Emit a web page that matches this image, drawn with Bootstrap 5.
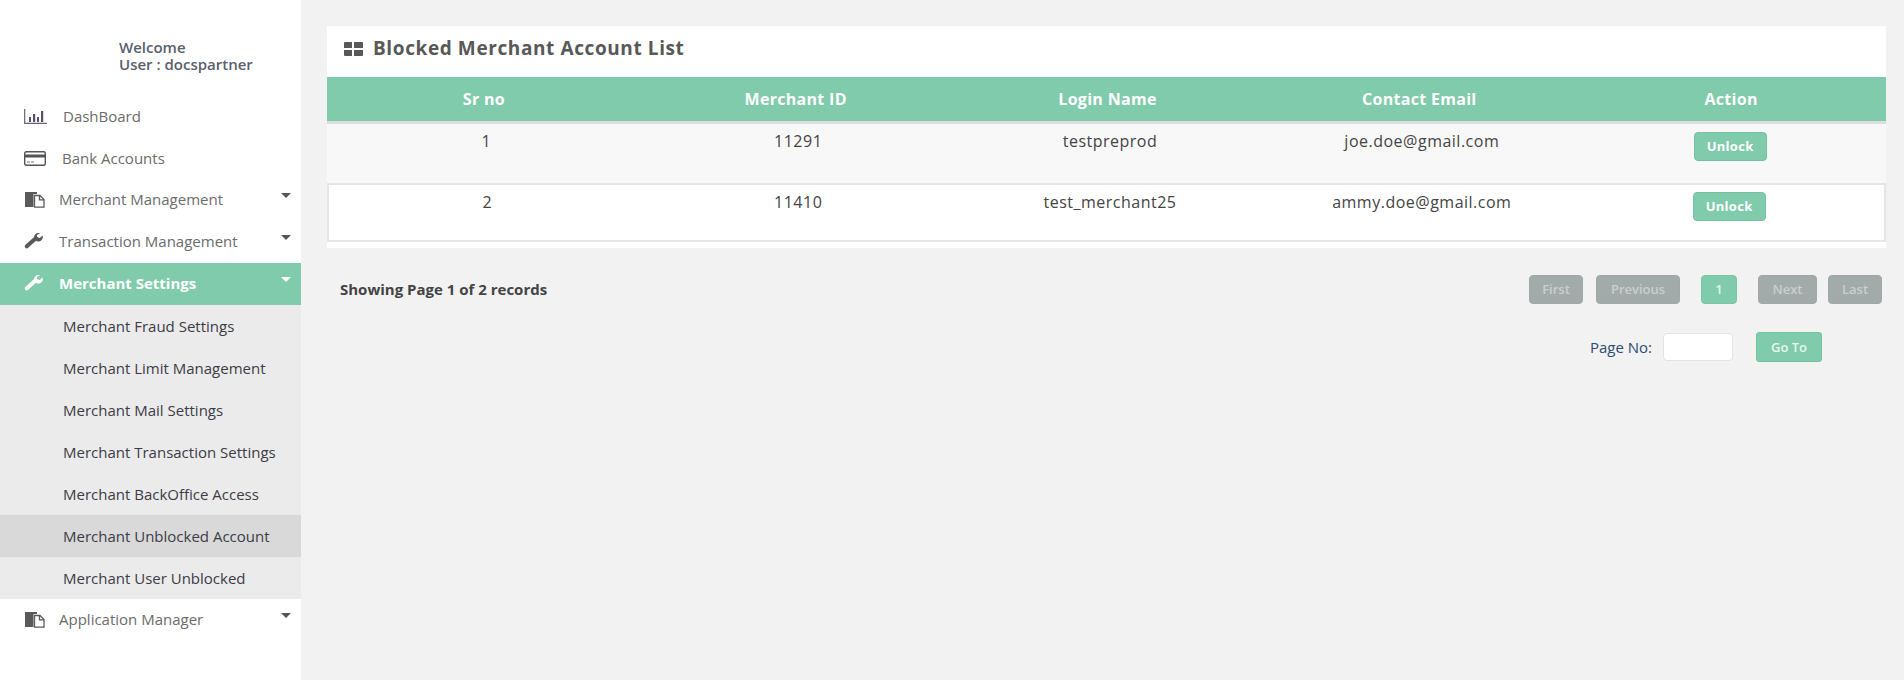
<!DOCTYPE html>
<html lang="en">
<head>
<meta charset="utf-8">
<title>Blocked Merchant Account List</title>
<link href="https://cdn.jsdelivr.net/npm/bootstrap@5.3.0/dist/css/bootstrap.min.css" rel="stylesheet">
<style>
html,body{height:100%}
body{background:#f2f2f2;font-family:"Open Sans","Liberation Sans",sans-serif;color:#444;overflow:hidden}
.shell{height:680px}
.side{width:301px;flex:none;background:#fff;height:680px}
.who{padding:39px 0 0 119px;height:95px;font-size:15px;font-weight:600;line-height:17px;color:#5a5f6e}
.mitem{height:42px;display:flex;align-items:center;position:relative;color:#6c6c6c;font-size:15px;font-weight:500;text-decoration:none}
.mitem.drop{padding-bottom:2px}
.mitem .ico{width:59px;padding-left:24px;display:flex;align-items:center;flex:none}
.mitem .ico.wide{width:63px}
.mitem .ico.cardico{width:62px}
.mitem.on{background:#7fcbab;color:#fff;font-weight:700}
.mitem .caret{position:absolute;right:10px;top:14px;width:0;height:0;border-left:5px solid transparent;border-right:5px solid transparent;border-top:5px solid #555}
.mitem.on .caret{border-top-color:#fff}
.subs{background:#ebebeb}
.subs a{display:flex;align-items:center;height:42px;padding-left:63px;color:#3c3c46;font-size:15px;font-weight:500;text-decoration:none}
.subs a.cur{background:#d9d9d9}
.main{flex:1;padding:26px 18px 0 26px;min-width:0}
.panel{background:#fff;padding-bottom:6px}
.ptitle{height:51px;display:flex;align-items:center;padding:0 0 6px 17px;gap:10px;font-size:19px;font-weight:700;letter-spacing:.6px;color:#585858}
.grid{table-layout:fixed;margin:0;width:100%;text-align:center;font-size:16px;letter-spacing:.5px;border-collapse:separate;border-spacing:0;--bs-table-bg:transparent}
.grid th{background:#7fcbab;color:#fff;font-weight:700;font-size:16px;letter-spacing:.3px;height:47px;vertical-align:middle;padding:0 0 1px 2px;border:0;border-bottom:3px solid #ddd;box-shadow:none}
.grid td{height:59px;padding:5px 0 0;vertical-align:top;border:0;color:#444;font-weight:500;line-height:24px;box-shadow:none}
.grid td:not(:last-child){padding-left:7px}
.grid tr.alt td{background:#f8f8f8}
.grid tr.plain td{border-top:2px solid #e6e6e6;border-bottom:2px solid #e6e6e6;padding-top:5px}
.grid tr.plain td:first-child{border-left:2px solid #e6e6e6}
.grid tr.plain td:last-child{border-right:2px solid #e6e6e6}
.grid tr.plain .act{margin-top:2px}
.act{display:inline-block;background:#7fcbab;color:#fff;border:1px solid #74c2a1;border-radius:4px;font-size:13px;font-weight:700;letter-spacing:.3px;padding:0;width:73px;height:29px;line-height:27px;margin-top:3px;text-decoration:none}
.foot{padding:27px 4px 0 13px}
.count{font-size:15px;font-weight:700;color:#444}
.pbtn{display:inline-block;height:29px;line-height:27px;border-radius:4px;border:1px solid #a0a9a6;background:#a3abaa;color:#c9cfcd;font-size:13px;font-weight:600;text-align:center;padding:0}
.pbtn.now{background:#7fcbab;border-color:#78c6a5;color:#e6f5ee}
.w1{width:54px}.w2{width:84px;margin:0 21px 0 13px}.w3{width:36px}.w4{width:59px;margin:0 11px 0 21px}.w5{width:54px}
.jump{padding:28px 64px 0 0;gap:11px}
.jump label{font-size:15px;color:#2f4a70;font-weight:500}
.jump input{width:70px;height:28px;border:1px solid #e3e3e3;border-radius:4px;background:#fff;margin-right:12px}
.go{display:inline-block;width:66px;height:30px;line-height:28px;background:#7fcbab;border:1px solid #74c2a1;border-radius:3px;color:#eaf7f1;font-size:13px;font-weight:600;text-align:center}
</style>
</head>
<body>
<div class="d-flex shell">
  <aside class="side">
    <div class="who">Welcome<br>User : docspartner</div>
    <nav>
      <a class="mitem" href="#"><span class="ico wide"><svg width="23" height="15" viewBox="0 0 23 15"><path d="M.7 0v14.300H23" fill="none" stroke="#6b5f78" stroke-width="1.200"/><path d="M5 8h2v5H5zM9 5h2.200v8H9zM13 8h2v5h-2zM17 2h2.200v11H17z" fill="#55506a"/></svg></span>DashBoard</a>
      <a class="mitem" href="#"><span class="ico cardico"><svg width="22" height="15" viewBox="0 0 22 15"><rect x=".7" y=".7" width="20.600" height="13.600" rx="1.500" fill="#fff" stroke="#555" stroke-width="1.400"/><path d="M0 3.500h22v3H0z" fill="#555"/><path d="M3 11h3M7 11h3" stroke="#777"/></svg></span>Bank Accounts</a>
      <a class="mitem drop" href="#"><span class="ico"><svg width="21" height="17" viewBox="0 0 21 17"><path d="M1 1h12v2H9.500v13H1z" fill="#5a5a5a"/><path d="M10.500 4.500h5.500l4 4v7.700h-9.500z" fill="#fff" stroke="#5a5a5a" stroke-width="1.300"/><path d="M15.500 4.500v4.300H20" fill="none" stroke="#5a5a5a" stroke-width="1.300"/></svg></span>Merchant Management<span class="caret"></span></a>
      <a class="mitem drop" href="#"><span class="ico"><svg width="19" height="16" viewBox="0 0 19 16"><path d="M2.800 13.300l9-8" fill="none" stroke="#5a5a5a" stroke-width="4" stroke-linecap="round"/><path d="M18.800 2.500l-3.300 2.400-2.300-.8-.3-2.200L16 .3c-3-.9-6 1-6 4 0 3 3 5 6 4 2-.6 3.200-3 2.800-5.800z" fill="#5a5a5a"/></svg></span>Transaction Management<span class="caret"></span></a>
      <a class="mitem on drop" href="#"><span class="ico"><svg width="19" height="16" viewBox="0 0 19 16"><path d="M2.800 13.300l9-8" fill="none" stroke="#fff" stroke-width="4" stroke-linecap="round"/><path d="M18.800 2.500l-3.300 2.400-2.300-.8-.3-2.200L16 .3c-3-.9-6 1-6 4 0 3 3 5 6 4 2-.6 3.200-3 2.800-5.800z" fill="#fff"/></svg></span>Merchant Settings<span class="caret"></span></a>
      <div class="subs">
        <a href="#">Merchant Fraud Settings</a>
        <a href="#">Merchant Limit Management</a>
        <a href="#">Merchant Mail Settings</a>
        <a href="#">Merchant Transaction Settings</a>
        <a href="#">Merchant BackOffice Access</a>
        <a href="#" class="cur">Merchant Unblocked Account</a>
        <a href="#">Merchant User Unblocked</a>
      </div>
      <a class="mitem drop" href="#"><span class="ico"><svg width="21" height="17" viewBox="0 0 21 17"><path d="M1 1h12v2H9.500v13H1z" fill="#5a5a5a"/><path d="M10.500 4.500h5.500l4 4v7.700h-9.500z" fill="#fff" stroke="#5a5a5a" stroke-width="1.300"/><path d="M15.500 4.500v4.300H20" fill="none" stroke="#5a5a5a" stroke-width="1.300"/></svg></span>Application Manager<span class="caret"></span></a>
    </nav>
  </aside>
  <main class="main">
    <section class="panel">
      <div class="ptitle"><svg width="19" height="14" viewBox="0 0 19 14"><path d="M0 1a1 1 0 0 1 1-1h7v6H0zM10 0h8a1 1 0 0 1 1 1v5h-9zM0 8h8v6H1a1 1 0 0 1-1-1zM10 8h9v5a1 1 0 0 1-1 1h-8z" fill="#585858"/></svg><span>Blocked Merchant Account List</span></div>
      <table class="table grid">
        <thead><tr><th>Sr no</th><th>Merchant ID</th><th>Login Name</th><th>Contact Email</th><th>Action</th></tr></thead>
        <tbody>
          <tr class="alt"><td>1</td><td>11291</td><td>testpreprod</td><td>joe.doe@gmail.com</td><td><a class="act" href="#">Unlock</a></td></tr>
          <tr class="plain"><td>2</td><td>11410</td><td>test_merchant25</td><td>ammy.doe@gmail.com</td><td><a class="act" href="#">Unlock</a></td></tr>
        </tbody>
      </table>
    </section>
    <div class="d-flex justify-content-between align-items-center foot">
      <span class="count">Showing Page 1 of 2 records</span>
      <div class="d-flex">
        <span class="pbtn w1">First</span><span class="pbtn w2">Previous</span><span class="pbtn now w3">1</span><span class="pbtn w4">Next</span><span class="pbtn w5">Last</span>
      </div>
    </div>
    <div class="d-flex justify-content-end align-items-center jump">
      <label for="pg">Page No:</label><input id="pg" type="text"><span class="go">Go To</span>
    </div>
  </main>
</div>
<script src="https://cdn.jsdelivr.net/npm/bootstrap@5.3.0/dist/js/bootstrap.bundle.min.js"></script>
</body>
</html>
